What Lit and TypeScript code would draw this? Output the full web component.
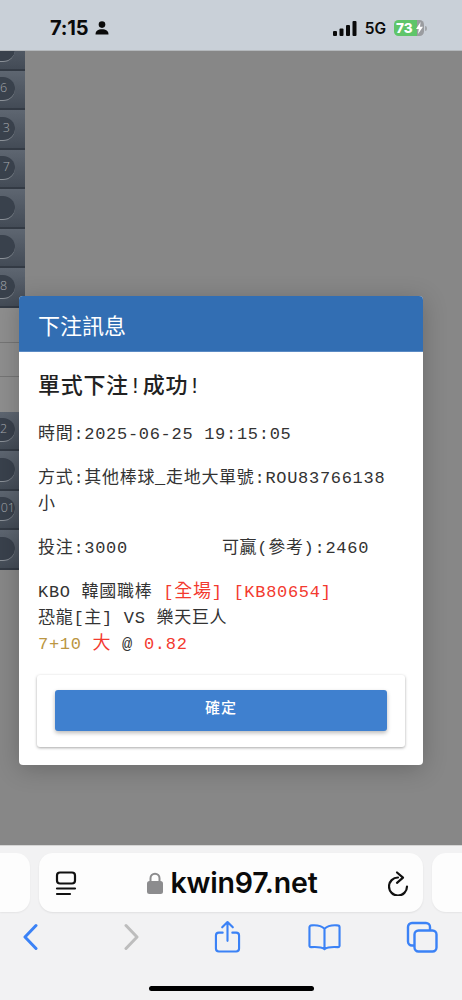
import { LitElement, html, css } from "lit";
import { customElement } from "lit/decorators.js";

type Row = { label: string; inset?: boolean };
const TOP_ROWS: Row[] = [{ label: "" }, { label: "6" }, { label: "3", inset: true }, { label: "7", inset: true }, { label: "" }, { label: "" }, { label: "8" }];
const LOWER_ROWS: Row[] = [{ label: "2" }, { label: "" }, { label: "01" }, { label: "" }];

@customElement("app-root")
export class AppRoot extends LitElement {
  static styles = css`
    :host { display: block; width: 462px; height: 1000px; overflow: hidden; font-family: "Liberation Mono", "Noto Sans CJK TC", monospace; }
    .page { display: flex; flex-direction: column; height: 1000px; }
    .status { height: 51px; flex: none; background: #c9d0d8; border-bottom: 1px solid #b4b8bc; box-sizing: border-box; display: flex; align-items: center; padding: 6px 35px 0 50px; font-family: Inter, "Liberation Sans", sans-serif; color: #0a0a0a; }
    .time { font-size: 20px; font-weight: 700; letter-spacing: -0.2px; }
    .person { margin-left: 7px; }
    .spacer { flex: 1; }
    .net { font-size: 15.5px; font-weight: 600; margin: 0 8px; }
    .battery { position: relative; width: 30px; height: 16px; border-radius: 4.5px; overflow: hidden; background: linear-gradient(90deg, #5fc56a 0 23px, #9a9ca0 23px); color: #fff; font-size: 13.5px; font-weight: 800; line-height: 16px; padding-left: 2px; box-sizing: border-box; }
    .bolt { position: absolute; right: 1px; top: 2px; }
    .tip { width: 2px; height: 5px; margin-left: 1px; border-radius: 0 2px 2px 0; background: #a3a6aa; }

    .main { position: relative; flex: 1; background: #878787; overflow: hidden; }
    .strip { width: 25px; margin-top: -20px; display: flex; flex-direction: column; }
    .row { height: 39.5px; box-sizing: border-box; background: linear-gradient(#5e6671, #434b56); border-bottom: 2px solid #333a44; display: flex; align-items: center; justify-content: flex-end; font-family: "Open Sans", "Liberation Sans", sans-serif; }
    .pill { flex: none; width: 15px; height: 24px; margin-right: 10px; border-radius: 0 12px 12px 0; background: #39414c; border-bottom: 1px solid #8a9097; color: #a4a8ad; font-size: 12.5px; font-weight: 300; line-height: 22px; box-sizing: border-box; text-align: right; padding-right: 8px; }
    .pill.inset { padding-right: 5px; }
    .pill.wide { padding-right: 0; }
    .plain { height: 35px; width: 19px; border-bottom: 1px solid #757575; box-sizing: border-box; background: #8e8e8e; }
    .plain.tall { height: 34px; }
    .plain.last { height: 35px; border: 0; }

    .modal { position: absolute; left: 19px; top: 245px; width: 404px; height: 469px; background: #fff; border-radius: 4px; overflow: hidden; box-shadow: 0 4px 24px rgba(0,0,0,.22); display: flex; flex-direction: column; }
    .head { height: 56px; flex: none; box-sizing: border-box; background: #326eb3; border-bottom: 1px solid #5a8ac4; color: #fff; font-family: "Noto Sans CJK TC", sans-serif; font-size: 22px; line-height: 56px; padding-left: 19px; }
    .body { padding: 21px 19px 0; color: #333; font-size: 17px; line-height: 26px; letter-spacing: .7px; }
    h3 { margin: 0 0 19px; font-size: 22px; line-height: 30px; font-weight: 500; color: #222; }
    p { margin: 0 0 18px; }
    .gap { display: inline-block; width: 94px; }
    .red { color: #f33a2f; }
    .big { font-size: 18px; line-height: 1; }
    .gold { color: #bb9642; }
    .card { margin: 17px -1px 0; height: 72px; box-sizing: border-box; padding: 15px 18px; border-radius: 3px; box-shadow: 0 1px 3px rgba(0,0,0,.35); }
    p + .card { margin-top: -1px; }
    .ok { display: block; width: 100%; height: 41px; border: 0; border-radius: 3px; background: #3f80cf; color: #fff; font-family: "Noto Sans CJK TC", sans-serif; font-size: 15px; font-weight: 500; letter-spacing: 1px; box-shadow: 0 2px 4px rgba(0,0,0,.28); padding: 0 0 9px; }

    .bottom { height: 155px; flex: none; background: #f2f2f3; border-top: 1px solid #d5d5d5; box-sizing: border-box; display: flex; flex-direction: column; }
    .tabs { display: grid; grid-template-columns: 30px 384px 30px; gap: 9px; margin: 7px 0 0 0; height: 59px; }
    .tab { background: #fdfdfd; border-radius: 0 14px 14px 0; box-shadow: 0 1px 2px rgba(0,0,0,.06); }
    .tab.right { border-radius: 14px 0 0 14px; }
    .url { background: #fdfdfd; border-radius: 14px; box-shadow: 0 1px 2px rgba(0,0,0,.08); display: flex; align-items: center; padding: 0 13px 0 16px; }
    .addr { flex: 1; display: flex; justify-content: center; align-items: center; gap: 7px; font-family: Inter, "Liberation Sans", sans-serif; font-weight: 600; font-size: 28.5px; letter-spacing: -.2px; color: #0a0a0a; }
    .tools { display: grid; grid-template-columns: 101px 90px 94px 98px auto; align-items: center; padding-left: 23px; margin-top: 7px; height: 36px; }
    .home { width: 165px; height: 5px; border-radius: 3px; background: #000; margin: 31px 0 0 149px; }
  `;

  private row(r: Row) {
    const cls = r.label.length > 1 ? "wide" : r.inset ? "inset" : "";
    return html`<div class="row"><div class="pill ${cls}">${r.label}</div></div>`;
  }

  render() {
    const blue = "#3b82f6";
    return html`<div class="page">
      <div class="status">
        <span class="time">7:15</span>
        <svg class="person" width="14" height="14" viewBox="0 0 14 14"><circle cx="7" cy="3.6" r="3.3" fill="#0a0a0a"/><path d="M0.5 13.5c0-3.6 2.6-5.2 6.5-5.2s6.5 1.6 6.5 5.2z" fill="#0a0a0a"/></svg>
        <span class="spacer"></span>
        <svg width="24" height="15" viewBox="0 0 24 15" fill="#0a0a0a"><rect x="0" y="10" width="4" height="5" rx="1"/><rect x="6.5" y="7.5" width="4" height="7.5" rx="1"/><rect x="13" y="4" width="4" height="11" rx="1"/><rect x="19.5" y="0" width="4" height="15" rx="1"/></svg>
        <span class="net">5G</span>
        <div class="battery">73<svg class="bolt" width="7" height="12" viewBox="0 0 7 12"><path d="M4.6 0L0 7h2.8L2 12l5-7.2H4z" fill="#fff"/></svg></div>
        <div class="tip"></div>
      </div>

      <div class="main">
        <div class="strip">
          ${TOP_ROWS.map((r) => this.row(r))}
          <div class="plain"></div>
          <div class="plain tall"></div>
          <div class="plain last"></div>
          ${LOWER_ROWS.map((r) => this.row(r))}
        </div>
        <div class="modal">
          <div class="head">下注訊息</div>
          <div class="body">
            <h3>單式下注!成功!</h3>
            <p>時間:2025-06-25 19:15:05</p>
            <p>方式:其他棒球_走地大單號:ROU83766138<br />小</p>
            <p>投注:3000<span class="gap"></span>可贏(參考):2460</p>
            <p>KBO 韓國職棒 <span class="red">[<span class="big">全場</span>] [KB80654]</span><br />恐龍[主] VS 樂天巨人<br /><span class="gold">7+10</span> <span class="red big">大</span> @ <span class="red">0.82</span></p>
            <div class="card"><button class="ok">確定</button></div>
          </div>
        </div>
      </div>

      <div class="bottom">
        <div class="tabs">
          <div class="tab"></div>
          <div class="url">
            <svg width="22" height="26" viewBox="0 0 22 26" fill="none" stroke="#111" stroke-width="2.200" stroke-linecap="round"><rect x="2" y="2.500" width="18" height="11" rx="3"/><path d="M2 18.500h18M2 24h13"/></svg>
            <div class="addr">
              <svg width="16" height="22" viewBox="0 0 16 22"><path d="M3.500 10V6.200a4.500 4.500 0 0 1 9 0V10" fill="none" stroke="#8c8c8e" stroke-width="2"/><rect x="0" y="9" width="16" height="13" rx="2.500" fill="#8c8c8e"/></svg>
              <span>kwin97.net</span>
            </div>
            <svg width="22" height="26" viewBox="0 0 22 26" fill="none" stroke="#111" stroke-width="2.200" stroke-linecap="round" stroke-linejoin="round"><path d="M10 7.500A9 9 0 1 0 19 16.500"/><path d="M9 2.500l6 5.200-6 5.200"/></svg>
          </div>
          <div class="tab right"></div>
        </div>
        <div class="tools">
          <svg width="15" height="28" viewBox="0 0 15 28" fill="none" stroke="${blue}" stroke-width="3" stroke-linecap="round" stroke-linejoin="round"><path d="M13 2.500L2 14l11 11.500"/></svg>
          <svg width="15" height="28" viewBox="0 0 15 28" fill="none" stroke="#bdbdbd" stroke-width="3" stroke-linecap="round" stroke-linejoin="round"><path d="M2 2.500L13 14 2 25.500"/></svg>
          <svg width="27" height="34" viewBox="0 0 28 34" fill="none" stroke="${blue}" stroke-width="2.200" stroke-linecap="round" stroke-linejoin="round"><path d="M9 12.500H5a3 3 0 0 0-3 3V29a3 3 0 0 0 3 3h18a3 3 0 0 0 3-3V15.500a3 3 0 0 0-3-3h-4"/><path d="M14 21V2M8.500 7L14 1.500 19.500 7"/></svg>
          <svg width="33" height="28" viewBox="0 0 34 28" fill="none" stroke="${blue}" stroke-width="2.200" stroke-linecap="round" stroke-linejoin="round"><path d="M17 5.500C14 2.500 9 1.500 3.500 2A2 2 0 0 0 1.500 4v19c0 1 .8 1.500 1.800 1.400C8.500 24 13.500 24 17 26.500V5.500zM17 5.500C20 2.500 25 1.500 30.500 2a2 2 0 0 1 2 2v19c0 1-.8 1.500-1.800 1.400C25.500 24 20.500 24 17 26.500"/></svg>
          <svg width="32" height="32" viewBox="0 0 32 32" fill="none" stroke="${blue}" stroke-width="2.400" stroke-linejoin="round"><rect x="8.500" y="9.500" width="22" height="21" rx="4"/><path d="M8 24.500H6a4 4 0 0 1-4-4V6a4 4 0 0 1 4-4h14a4 4 0 0 1 4 4v3"/></svg>
        </div>
        <div class="home"></div>
      </div>
    </div>`;
  }
}
